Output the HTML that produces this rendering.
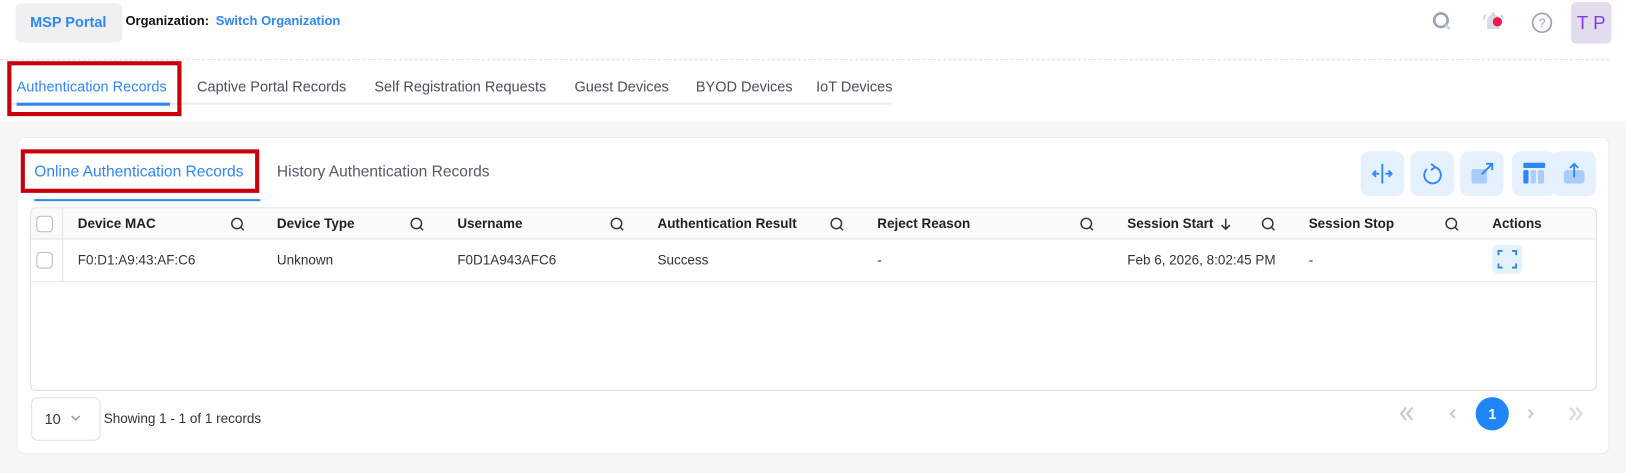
<!DOCTYPE html>
<html><head><meta charset="utf-8"><style>
*{box-sizing:border-box;margin:0;padding:0}
body{width:1626px;height:472px;background:#f7f7f8;font-family:"Liberation Sans",sans-serif;position:relative;overflow:hidden;color:#222}
#w{position:absolute;left:0;top:0;width:1568px;height:456px;transform:scale(1.037);transform-origin:0 0}
.a{position:absolute;white-space:nowrap}
.top{position:absolute;left:0;top:0;width:1600px;height:117px;background:#fff}
.tab{font-size:14px;color:#4a4f5a;top:75px}
.card{position:absolute;left:16px;top:132px;width:1536px;height:306px;background:#fff;border:1px solid #ececee;border-radius:8px}
.tbl{position:absolute;left:29px;top:200px;width:1511px;height:177px;border:1px solid #e0e0e4;border-radius:6px;background:#fff}
.th{font-size:13px;font-weight:bold;color:#222;top:208px}
.td{font-size:13px;color:#333;top:243px}
.cb{position:absolute;width:16px;height:16px;border:1px solid #b8b8be;border-radius:4px;background:#fff}
.btn{position:absolute;top:146px;width:42px;height:43px;background:#e6f1fe;border-radius:8px}
</style></head><body><div id="w">
<div class="top"></div>
<div class="a" style="left:15px;top:3px;width:103px;height:38px;background:#f0f0f3;border-radius:6px"></div>
<div class="a" style="left:29px;top:13px;font-size:14px;font-weight:bold;color:#2f87f5">MSP Portal</div>
<div class="a" style="left:121px;top:13px;font-size:12.5px;font-weight:bold;color:#111">Organization:</div>
<div class="a" style="left:208px;top:13px;font-size:12.5px;font-weight:bold;color:#2f87f5">Switch Organization</div>
<svg class="a" style="left:1380px;top:10px" width="22" height="22" viewBox="0 0 22 22"><circle cx="9.5" cy="9.5" r="6.5" fill="none" stroke="#9aa2b6" stroke-width="2.5"/><line x1="14" y1="14" x2="18" y2="18" stroke="#cfd3dc" stroke-width="2.5"/></svg>
<svg class="a" style="left:1428px;top:9px" width="24" height="24" viewBox="0 0 24 24"><path d="M6 19 V11 a6 6 0 0 1 12 0 V19 Z" fill="#d8dbe3"/><rect x="11" y="3" width="2" height="3" fill="#c8ccd6"/><path d="M4 5 L3 10 M20 5 L21 10" stroke="#c8ccd6" stroke-width="1.5"/><circle cx="16" cy="12" r="4.5" fill="#f0184a"/></svg>
<svg class="a" style="left:1476px;top:11px" width="22" height="22" viewBox="0 0 22 22"><circle cx="11" cy="11" r="9" fill="none" stroke="#9aa2b6" stroke-width="1.6"/><text x="11" y="15.5" font-size="12" text-anchor="middle" fill="#9aa2b6" font-family="Liberation Sans">?</text></svg>
<div class="a" style="left:1515px;top:2px;width:39px;height:40px;background:#e3dcec;border-radius:5px;color:#7b3fe4;font-size:18px;text-align:center;line-height:40px">T P</div>
<div class="a" style="left:0;top:57px;width:1552px;border-top:1px dashed #dcdce0"></div>
<div class="a" style="left:10px;top:99px;width:850px;height:2px;background:#ededf0"></div>
<div class="a tab" style="left:16px;color:#2f87f5">Authentication Records</div>
<div class="a" style="left:16px;top:99px;width:148px;height:3px;background:#2f87f5"></div>
<div class="a" style="left:7px;top:59px;width:168px;height:53px;border:4px solid #c8000a"></div>
<div class="a tab" style="left:190px">Captive Portal Records</div>
<div class="a tab" style="left:361px">Self Registration Requests</div>
<div class="a tab" style="left:554px">Guest Devices</div>
<div class="a tab" style="left:671px">BYOD Devices</div>
<div class="a tab" style="left:787px">IoT Devices</div>
<div class="card"></div>
<div class="a" style="left:33px;top:157px;font-size:15px;color:#2f87f5">Online Authentication Records</div>
<div class="a" style="left:20px;top:144px;width:230px;height:42px;border:4px solid #c8000a"></div>
<div class="a" style="left:33px;top:192px;width:218px;height:1.5px;background:#2f87f5"></div>
<div class="a" style="left:267px;top:157px;font-size:15px;color:#555a66">History Authentication Records</div>
<div class="btn" style="left:1312px"><svg width="42" height="43" viewBox="0 0 42 43"><path d="M21 12 V31 M12 21.5 H18 M15 18.5 L12 21.5 L15 24.5 M24 21.5 H30 M27 18.5 L30 21.5 L27 24.5" stroke="#2f87f5" stroke-width="1.8" fill="none"/></svg></div>
<div class="btn" style="left:1360px"><svg width="42" height="43" viewBox="0 0 42 43"><path d="M23 15 A8 8 0 1 1 16 17" stroke="#2f87f5" stroke-width="1.8" fill="none"/><path d="M20 12 L24 15 L20 18" stroke="#2f87f5" stroke-width="1.8" fill="none"/></svg></div>
<div class="btn" style="left:1408px"><svg width="42" height="43" viewBox="0 0 42 43"><rect x="11" y="17" width="15" height="14" rx="2" fill="#a8cdfa"/><path d="M21 22 L31 12 M25 12 H31 V18" stroke="#2f87f5" stroke-width="1.8" fill="none"/></svg></div>
<div class="btn" style="left:1458px"><svg width="42" height="43" viewBox="0 0 42 43"><rect x="11" y="11" width="21" height="5" rx="1" fill="#2f87f5"/><rect x="11" y="18" width="5" height="13" rx="1" fill="#2f87f5"/><rect x="18" y="18" width="5" height="13" rx="1" fill="#a8cdfa"/><rect x="25" y="18" width="6" height="13" rx="1" fill="#a8cdfa"/></svg></div>
<div class="btn" style="left:1497px"><svg width="42" height="43" viewBox="0 0 42 43"><rect x="11" y="18" width="20" height="13" rx="3" fill="#a8cdfa"/><path d="M21 25 V12 M17 16 L21 12 L25 16" stroke="#2f87f5" stroke-width="1.8" fill="none"/></svg></div>
<div class="tbl"></div>
<div class="a" style="left:30px;top:201px;width:1509px;height:30px;background:#fafafa;border-bottom:1px solid #e0e0e4;border-radius:6px 6px 0 0"></div>
<div class="a" style="left:60px;top:201px;width:1px;height:70px;background:#e6e6ea"></div>
<div class="a" style="left:30px;top:271px;width:1509px;height:1px;background:#e6e6ea"></div>
<div class="cb" style="left:35px;top:208px"></div>
<div class="cb" style="left:35px;top:243px"></div>
<div class="a th" style="left:75px">Device MAC</div>
<div class="a th" style="left:267px">Device Type</div>
<div class="a th" style="left:441px">Username</div>
<div class="a th" style="left:634px">Authentication Result</div>
<div class="a th" style="left:846px">Reject Reason</div>
<div class="a th" style="left:1087px">Session Start</div>
<div class="a th" style="left:1262px">Session Stop</div>
<div class="a th" style="left:1439px">Actions</div>
<svg class="a" style="left:1175px;top:209px" width="14" height="14" viewBox="0 0 14 14"><path d="M7 2 V12 M3 8 L7 12 L11 8" stroke="#333" stroke-width="1.5" fill="none"/></svg>
<svg width="0" height="0" style="position:absolute"><defs><g id="q"><circle cx="6.5" cy="6.5" r="5" fill="none" stroke="#333" stroke-width="1.4"/><line x1="10" y1="10" x2="13" y2="13" stroke="#333" stroke-width="1.4"/></g></defs></svg>
<svg class="a" style="left:222px;top:209px" width="14" height="14"><use href="#q"/></svg>
<svg class="a" style="left:395px;top:209px" width="14" height="14"><use href="#q"/></svg>
<svg class="a" style="left:588px;top:209px" width="14" height="14"><use href="#q"/></svg>
<svg class="a" style="left:800px;top:209px" width="14" height="14"><use href="#q"/></svg>
<svg class="a" style="left:1041px;top:209px" width="14" height="14"><use href="#q"/></svg>
<svg class="a" style="left:1216px;top:209px" width="14" height="14"><use href="#q"/></svg>
<svg class="a" style="left:1393px;top:209px" width="14" height="14"><use href="#q"/></svg>
<div class="a td" style="left:75px">F0:D1:A9:43:AF:C6</div>
<div class="a td" style="left:267px">Unknown</div>
<div class="a td" style="left:441px">F0D1A943AFC6</div>
<div class="a td" style="left:634px">Success</div>
<div class="a td" style="left:846px">-</div>
<div class="a td" style="left:1087px">Feb 6, 2026, 8:02:45 PM</div>
<div class="a td" style="left:1262px">-</div>
<div class="a" style="left:1439px;top:236px;width:29px;height:28px;background:#e6f1fe;border-radius:5px"><svg width="29" height="28" viewBox="0 0 29 28"><path d="M6 10 V6 H10 M19 6 H23 V10 M23 18 V22 H19 M10 22 H6 V18" stroke="#2f87f5" stroke-width="1.8" fill="none"/></svg></div>
<div class="a" style="left:30px;top:383px;width:67px;height:42px;border:1px solid #e0e0e6;border-radius:6px"></div>
<div class="a" style="left:43px;top:396px;font-size:14px;color:#333">10</div>
<svg class="a" style="left:67px;top:398px" width="12" height="10"><path d="M2 3 L6 7 L10 3" stroke="#999" stroke-width="1.3" fill="none"/></svg>
<div class="a" style="left:100px;top:396px;font-size:13px;color:#333">Showing 1 - 1 of 1 records</div>
<svg class="a" style="left:1348px;top:391px" width="18" height="16" viewBox="0 0 18 16"><path d="M8 2 L3 8 L8 14 M14 2 L9 8 L14 14" stroke="#c4c8d6" stroke-width="2" fill="none"/></svg>
<svg class="a" style="left:1395px;top:391px" width="12" height="16" viewBox="0 0 12 16"><path d="M8 4 L4 8 L8 12" stroke="#c4c8d6" stroke-width="1.8" fill="none"/></svg>
<div class="a" style="left:1423px;top:383px;width:32px;height:32px;border-radius:50%;background:#1e86f7;color:#fff;font-size:14px;font-weight:bold;text-align:center;line-height:32px">1</div>
<svg class="a" style="left:1470px;top:391px" width="12" height="16" viewBox="0 0 12 16"><path d="M4 4 L8 8 L4 12" stroke="#c4c8d6" stroke-width="1.8" fill="none"/></svg>
<svg class="a" style="left:1510px;top:391px" width="18" height="16" viewBox="0 0 18 16"><path d="M4 2 L9 8 L4 14 M10 2 L15 8 L10 14" stroke="#d4d8e2" stroke-width="2" fill="none"/></svg>
</div></body></html>
